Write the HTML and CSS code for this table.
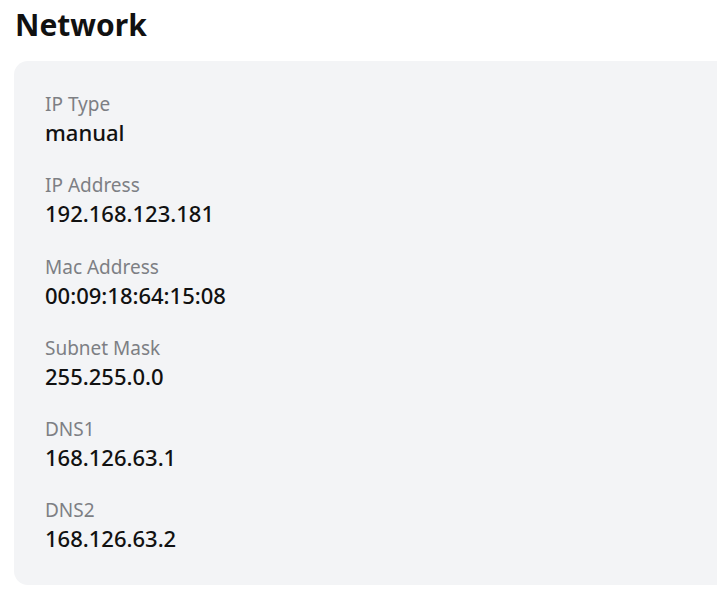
FILE: index.html
```html
<!DOCTYPE html>
<html>
<head>
<meta charset="utf-8">
<link rel="stylesheet" href="styles.css">
</head>
<body>
<main class="page">
  <h1 class="title">Network</h1>
  <section class="card">
    <div class="field"><div class="label">IP Type</div><div class="value">manual</div></div>
    <div class="field"><div class="label">IP Address</div><div class="value">192.168.123.181</div></div>
    <div class="field"><div class="label">Mac Address</div><div class="value">00:09:18:64:15:08</div></div>
    <div class="field"><div class="label">Subnet Mask</div><div class="value">255.255.0.0</div></div>
    <div class="field"><div class="label">DNS1</div><div class="value">168.126.63.1</div></div>
    <div class="field"><div class="label">DNS2</div><div class="value">168.126.63.2</div></div>
  </section>
</main>
</body>
</html>
```

FILE: styles.css
```css
html, body {
  margin: 0;
  padding: 0;
  background: #ffffff;
  overflow: hidden;
}
body {
  font-family: "Noto Sans", "Open Sans", sans-serif;
  color: #111111;
}
.page {
  padding: 5px 0 0 14px;
}
.title {
  margin: 0 0 0 1px;
  font-size: 30px;
  font-weight: 700;
  line-height: 40px;
  color: #111111;
}
.card {
  margin-top: 16px;
  height: 524px;
  box-sizing: border-box;
  background: #f3f4f6;
  border-radius: 14px 0 0 14px;
  padding: 30px 31px 29px;
  display: flex;
  flex-direction: column;
  gap: 25.3px;
}
.label {
  font-size: 19px;
  line-height: 26px;
  color: #7d7f84;
}
.value {
  font-size: 22px;
  font-weight: 500;
  line-height: 30px;
  color: #111111;
}
```
